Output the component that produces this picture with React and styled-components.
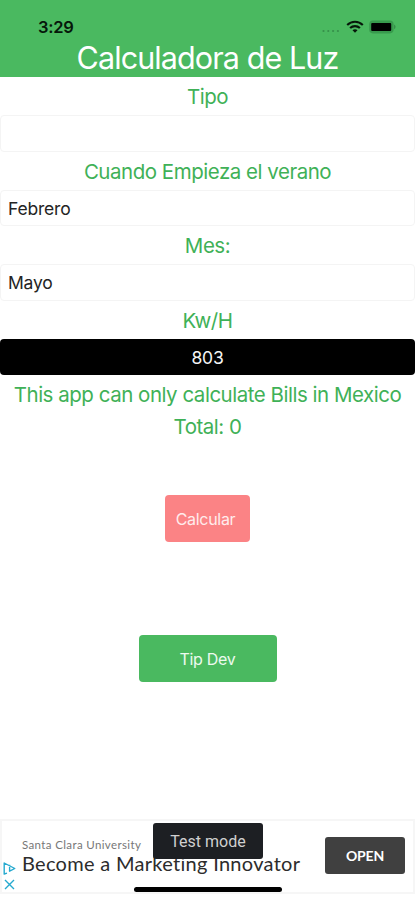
import styled, { createGlobalStyle } from "styled-components";

export default function App() {
    return (
        <>
            <GlobalStyle />
            <Screen>
                <Header>
                    <StatusBar>
                        <Time>3:29</Time>
                        <StatusIcons>
                            <Signal />
                            <Wifi />
                            <Battery />
                        </StatusIcons>
                    </StatusBar>
                    <Title>Calculadora de Luz</Title>
                </Header>

                <Form>
                    <Label>Tipo</Label>
                    <Field />
                    <Label>Cuando Empieza el verano</Label>
                    <Field>Febrero</Field>
                    <Label>Mes:</Label>
                    <Field>Mayo</Field>
                    <Label>Kw/H</Label>
                    <Field $dark>803</Field>
                    <Label>This app can only calculate Bills in Mexico</Label>
                    <Total>Total: 0</Total>
                </Form>

                <Actions>
                    <CalculateButton>Calcular</CalculateButton>
                    <TipButton>Tip Dev</TipButton>
                </Actions>

                <Ad>
                    <AdChoices />
                    <AdText>
                        <Advertiser>Santa Clara University</Advertiser>
                        <Headline>Become a Marketing Innovator</Headline>
                    </AdText>
                    <OpenButton>OPEN</OpenButton>
                    <TestMode>Test mode</TestMode>
                    <HomeIndicator />
                </Ad>
            </Screen>
        </>
    );
}

function Signal() {
    return (
        <svg width="20" height="14" viewBox="0 0 20 14" fill="#36904a">
            <circle cx="2.5" cy="11" r="1.1" />
            <circle cx="7.3" cy="11" r="1.1" />
            <circle cx="12.1" cy="11" r="1.1" />
            <circle cx="16.9" cy="11" r="1.1" />
        </svg>
    );
}

function Wifi() {
    return (
        <svg width="18" height="14" viewBox="0 0 18 14" fill="none" stroke="#06170a" strokeWidth="2.1">
            <path d="M1.2 5C5.6 0.7 12.4 0.7 16.8 5" />
            <path d="M4.1 8.1C6.9 5.4 11.1 5.4 13.9 8.1" />
            <path d="M9 12.8L6.5 10.3C7.9 9 10.1 9 11.5 10.3Z" fill="#06170a" stroke="none" />
        </svg>
    );
}

function Battery() {
    return (
        <svg width="27" height="14" viewBox="0 0 27 14">
            <rect x="0.2" y="0.4" width="24.4" height="13" rx="3.8" fill="#389a4d" />
            <rect x="2.2" y="2.9" width="20" height="8" rx="1" fill="#000" />
            <path d="M25.3 4.6C26.8 5.4 26.8 8.4 25.3 9.2Z" fill="#2f7d40" />
        </svg>
    );
}

function AdChoices() {
    return (
        <AdIcons>
            <svg width="13" height="13" viewBox="0 0 13 13" fill="none" stroke="#25a9cf" strokeWidth="1.4" strokeLinejoin="round">
                <path d="M4 11.2L1.2 12V1L11.8 6.5L6.6 9.2V5" />
                <path d="M6.6 2.8V3.6" />
            </svg>
            <svg width="13" height="13" viewBox="0 0 13 13" fill="none" stroke="#25a9cf" strokeWidth="1.4">
                <path d="M2 2L11 11M11 2L2 11" />
            </svg>
        </AdIcons>
    );
}

const GlobalStyle = createGlobalStyle`
    * {
        box-sizing: border-box;
    }

    body {
        margin: 0;
        background: #fff;
        font-family: Inter, "Liberation Sans", sans-serif;
    }
`;

const Screen = styled.main`
    display: flex;
    flex-direction: column;
    width: 415px;
    height: 900px;
    overflow: hidden;
    background: #fff;
`;

const Header = styled.header`
    display: flex;
    flex-direction: column;
    height: 77px;
    padding-top: 17px;
    background: #4ab960;
`;

const StatusBar = styled.div`
    display: flex;
    justify-content: space-between;
    align-items: center;
    height: 20px;
    padding: 0 19px 0 38px;
`;

const Time = styled.span`
    color: #06170a;
    font-size: 16.5px;
    font-weight: 600;
    letter-spacing: -0.3px;
`;

const StatusIcons = styled.div`
    display: flex;
    align-items: center;
    gap: 5px;
`;

const Title = styled.h1`
    margin: 2px 0 0;
    color: #fff;
    font-size: 30.5px;
    font-weight: 400;
    line-height: 38px;
    letter-spacing: -0.9px;
    text-align: center;
`;

const Form = styled.section`
    display: flex;
    flex-direction: column;
`;

const Label = styled.div`
    height: 38px;
    color: #3fb157;
    font-size: 20.5px;
    font-weight: 400;
    line-height: 39.5px;
    letter-spacing: -0.48px;
    text-align: center;
    white-space: nowrap;
`;

const Total = styled(Label)`
    height: 28px;
    line-height: 28px;
`;

const Field = styled.div`
    display: flex;
    align-items: center;
    justify-content: ${({ $dark }) => ($dark ? "center" : "flex-start")};
    height: 36.6px;
    padding: 1px 7px 0;
    border: ${({ $dark }) => ($dark ? "0" : "1.5px solid #f4f4f4")};
    border-radius: 4px;
    background: ${({ $dark }) => ($dark ? "#000" : "#fff")};
    color: ${({ $dark }) => ($dark ? "#f4f4f4" : "#242424")};
    font-size: 17.5px;
    letter-spacing: -0.2px;
`;

const Actions = styled.div`
    display: flex;
    flex-direction: column;
    align-items: center;
    gap: 93px;
    margin-top: 54px;
`;

const Button = styled.button`
    height: 47px;
    padding: 1px 0 0;
    border: 0;
    border-radius: 4px;
    color: #fff;
    font-family: inherit;
    font-size: 16px;
    letter-spacing: -0.3px;
`;

const CalculateButton = styled(Button)`
    width: 85px;
    padding-right: 4px;
    background: #fb8385;
    color: #ffecec;
`;

const TipButton = styled(Button)`
    width: 138px;
    background: #4ab960;
    color: #ecfaee;
`;

const Ad = styled.aside`
    position: relative;
    display: flex;
    height: 75px;
    margin: auto 0 6px;
    border: 2px solid #f6f6f6;
    background: #fff;
`;

const AdIcons = styled.div`
    display: flex;
    flex-direction: column;
    justify-content: flex-end;
    gap: 3px;
    width: 20px;
    padding: 0 0 1px 1px;
`;

const AdText = styled.div`
    flex: 1;
    padding-top: 16px;
    white-space: nowrap;
`;

const Advertiser = styled.div`
    color: #777;
    font-family: Lato, sans-serif;
    font-size: 11.5px;
    line-height: 16px;
    letter-spacing: 0.37px;
`;

const Headline = styled.div`
    color: #2c2c2c;
    font-family: Lato, sans-serif;
    font-size: 20px;
    line-height: 20px;
    letter-spacing: 0.3px;
    font-variant-ligatures: none;
`;

const OpenButton = styled.button`
    width: 80px;
    height: 37px;
    margin: 16px 8px 0 0;
    padding: 0;
    border: 0;
    border-radius: 3px;
    background: #404040;
    color: #fff;
    font-family: Lato, sans-serif;
    font-size: 14px;
    font-weight: 700;
    letter-spacing: -0.2px;
`;

const TestMode = styled.div`
    position: absolute;
    top: 2px;
    left: 151px;
    width: 110px;
    height: 36px;
    border-radius: 3px;
    background: #1d1f23;
    color: #d0d0d0;
    font-family: Roboto, sans-serif;
    font-size: 16px;
    line-height: 37px;
    text-align: center;
`;

const HomeIndicator = styled.div`
    position: absolute;
    bottom: 0;
    left: 132px;
    width: 148px;
    height: 5px;
    border-radius: 3px;
    background: #000;
`;
